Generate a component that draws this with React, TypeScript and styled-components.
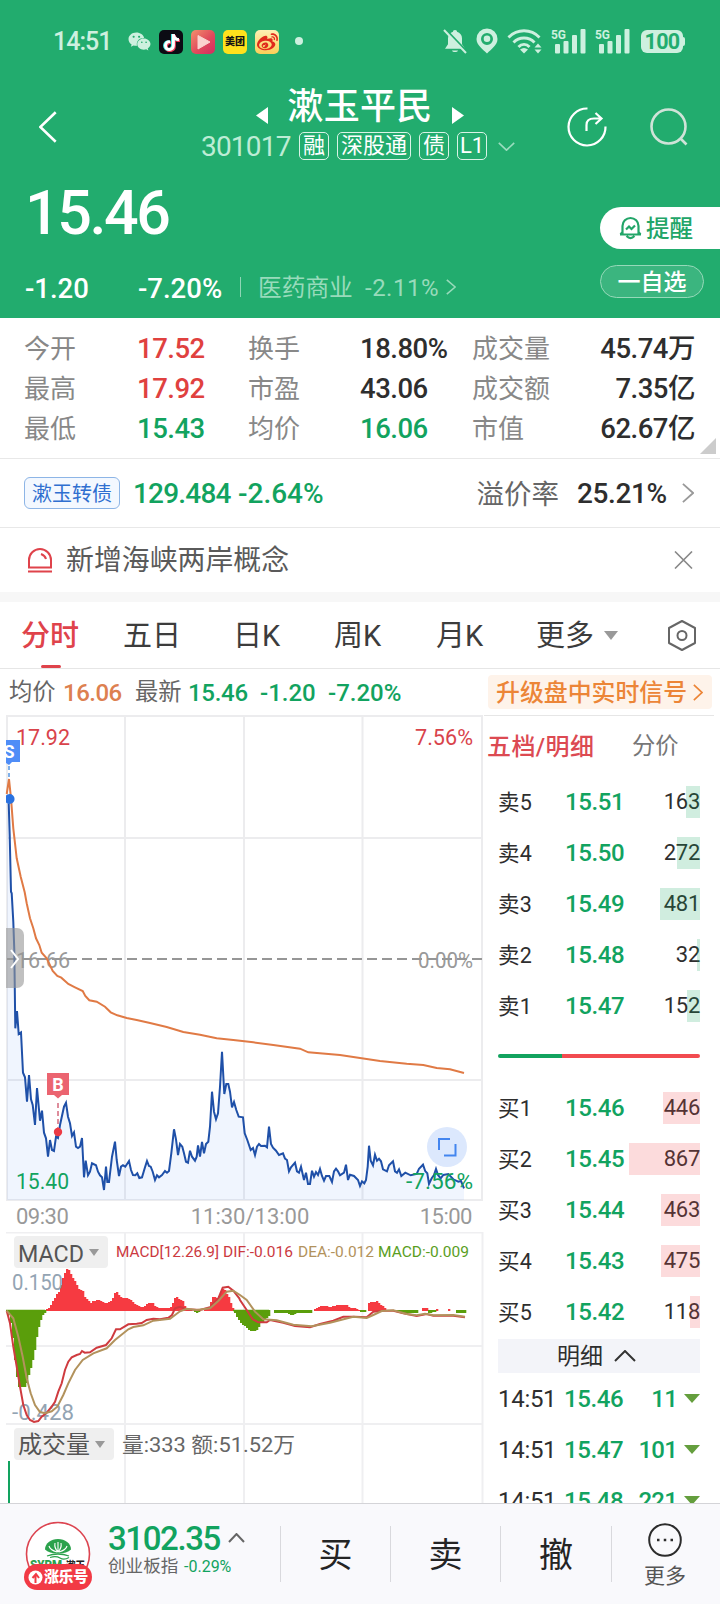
import React from "react";
import styled, { createGlobalStyle } from "styled-components";
import { FaTiktok, FaWeibo, FaWeixin } from "react-icons/fa6";

const GREEN = "#12a35f";
const RED = "#e0413f";
const INK = "#2e2e2e";
const FONT = 'Roboto, "Noto Sans CJK SC", sans-serif';

const GlobalStyle = createGlobalStyle`
  * { box-sizing: border-box; }
  body { margin: 0; background: #fff; font-family: ${FONT}; color: ${INK}; }
  svg { display: block; flex: none; }
`;

const Page = styled.div`
  width: 720px;
  height: 1604px;
  display: flex;
  flex-direction: column;
  overflow: hidden;
  background: #fff;
`;

const Txt = styled.span<{ $s: number; $c?: string; $w?: number; $ls?: number; $ml?: number; $width?: number }>`
  flex: none;
  padding-top: 2px;
  white-space: nowrap;
  font-size: ${(p) => p.$s}px;
  line-height: 1.2;
  color: ${(p) => p.$c || "inherit"};
  font-weight: ${(p) => p.$w || 400};
  letter-spacing: ${(p) => p.$ls || 0}px;
  margin-left: ${(p) => p.$ml || 0}px;
  width: ${(p) => (p.$width ? p.$width + "px" : "auto")};
`;

/* ---------- header ---------- */
const Header = styled.header`
  height: 318px;
  flex: none;
  background: #22ac6e;
  color: #fff;
`;
const StatusBar = styled.div`
  height: 82px;
  display: flex;
  align-items: center;
  padding: 0 35px 0 53px;
  color: #cdf0df;
`;
const AppIcon = styled.div<{ $bg: string }>`
  width: 24px;
  height: 24px;
  border-radius: 5px;
  margin: 2px 0 0 8px;
  display: flex;
  align-items: center;
  justify-content: center;
  background: ${(p) => p.$bg};
  color: #151515;
  font-size: 10px;
  font-weight: 900;
  line-height: 1;
`;
const NoticeDot = styled.i`
  width: 8px;
  height: 8px;
  border-radius: 50%;
  background: #cdf0df;
  margin: 0 auto 0 16px;
`;
const StatusIcons = styled.div`
  display: flex;
  align-items: center;
`;
const Battery = styled.div`
  width: 42px;
  height: 23px;
  margin-left: 11px;
  border-radius: 6px;
  background: #cdf0df;
  color: #22ac6e;
  font-size: 21.5px;
  font-weight: 700;
  line-height: 24px;
  text-align: center;
  letter-spacing: -0.6px;
`;
const BatteryTip = styled.i`
  width: 2px;
  height: 9px;
  background: #cdf0df;
  border-radius: 0 2px 2px 0;
`;
const TitleBar = styled.div`
  height: 90px;
  display: grid;
  grid-template-columns: 201px 317px 202px;
`;
const Side = styled.div<{ $pl: number; $gap?: number }>`
  display: flex;
  align-items: center;
  padding-left: ${(p) => p.$pl}px;
  gap: ${(p) => p.$gap || 0}px;
`;
const TitleLine = styled.div`
  height: 48px;
  display: flex;
  align-items: center;
  justify-content: center;
  gap: 19px;
  padding: 2px 0 0 1px;
  svg { margin-top: 17px; }
`;
const CodeLine = styled.div`
  height: 32px;
  display: flex;
  align-items: center;
  gap: 8px;
`;
const Tag = styled.span`
  height: 28px;
  min-width: 30px;
  padding: 0 2px;
  border: 1px solid #d9f3e6;
  border-radius: 5px;
  font-size: 22px;
  line-height: 26px;
  text-align: center;
  white-space: nowrap;
`;
const WideTag = styled(Tag)`
  width: 74px;
`;
const HeaderBody = styled.div`
  display: flex;
  height: 146px;
`;
const Figures = styled.div`
  flex: 1;
`;
const PriceLine = styled.div`
  height: 82px;
  display: flex;
  align-items: center;
  padding-left: 25px;
`;
const ChangeLine = styled.div`
  height: 66px;
  display: flex;
  align-items: center;
  padding-left: 25px;
`;
const VRule = styled.i<{ $h: number; $c: string }>`
  width: 1px;
  height: ${(p) => p.$h}px;
  background: ${(p) => p.$c};
  flex: none;
`;
const Actions = styled.div`
  width: 120px;
  padding-top: 35px;
`;
const RemindButton = styled.div`
  height: 42px;
  border-radius: 21px 0 0 21px;
  background: #fff;
  display: flex;
  align-items: center;
  padding-left: 19px;
  gap: 4px;
`;
const WatchButton = styled.div`
  width: 104px;
  height: 33px;
  margin-top: 16px;
  border-radius: 17px;
  border: 1px solid #96d9b9;
  background: #3bb57f;
  display: flex;
  align-items: center;
  justify-content: center;
`;

/* ---------- figures under the header ---------- */
const Stats = styled.section`
  position: relative;
  height: 141px;
  flex: none;
  padding: 11px 25px 0 24px;
  border-bottom: 1px solid #e8e8e8;
  display: grid;
  grid-template-columns: 113px 111px 112px 112px 90px 1fr;
  grid-auto-rows: 40px;
  align-items: center;
  align-content: start;
`;
const StatLabel = styled.span`
  font-size: 26px;
  line-height: 40px;
  color: #888;
  white-space: nowrap;
`;
const StatValue = styled.span<{ $c?: string; $last?: boolean }>`
  font-size: 27.5px;
  line-height: 40px;
  font-weight: 500;
  letter-spacing: -0.5px;
  white-space: nowrap;
  color: ${(p) => p.$c || INK};
  text-align: ${(p) => (p.$last ? "right" : "left")};
`;
const Corner = styled.i`
  position: absolute;
  right: 4px;
  bottom: 4px;
  border-left: 16px solid transparent;
  border-bottom: 16px solid #ccc;
`;
const BondRow = styled.section`
  height: 69px;
  flex: none;
  display: flex;
  align-items: center;
  padding: 0 26px 0 24px;
  border-bottom: 1px solid #e8e8e8;
`;
const BondTag = styled.span`
  width: 96px;
  height: 32px;
  border: 1px solid #8db5e6;
  border-radius: 6px;
  background: #f3f8ff;
  color: #2f6fd0;
  font-size: 20px;
  line-height: 32px;
  text-align: center;
`;
const Spacer = styled.i`
  flex: 1;
`;
const NewsRow = styled.section`
  height: 74px;
  flex: none;
  display: flex;
  align-items: center;
  padding: 0 27px;
  border-bottom: 10px solid #f7f7f7;
`;

/* ---------- tabs ---------- */
const Tabs = styled.nav`
  height: 67px;
  flex: none;
  display: flex;
  align-items: center;
  padding-left: 21px;
  border-bottom: 1px solid #e6e6e6;
`;
const Tab = styled.div<{ $w: number; $on?: boolean }>`
  position: relative;
  width: ${(p) => p.$w}px;
  height: 66px;
  line-height: 68px;
  font-size: 29px;
  color: ${(p) => (p.$on ? "#df434b" : "#3c3c3c")};
  font-weight: ${(p) => (p.$on ? 500 : 400)};
  &::after {
    content: "";
    display: ${(p) => (p.$on ? "block" : "none")};
    position: absolute;
    left: 20px;
    bottom: 0;
    width: 20px;
    height: 3px;
    border-radius: 2px;
    background: #df434b;
  }
`;
const QuoteBar = styled.div`
  height: 46px;
  flex: none;
  display: flex;
  align-items: center;
  padding: 0 8px 0 9px;
`;
const Upgrade = styled.div`
  width: 224px;
  height: 34px;
  margin-left: auto;
  border-radius: 4px;
  background: #fef3ea;
  display: flex;
  align-items: center;
  justify-content: space-between;
  padding: 0 9px 0 8px;
`;

/* ---------- main area ---------- */
const Main = styled.main`
  height: 788px;
  flex: none;
  display: flex;
  overflow: hidden;
`;
const Charts = styled.div`
  width: 484px;
  flex: none;
`;
const Axis = styled.div`
  height: 30px;
  display: flex;
  justify-content: space-between;
  align-items: center;
  padding: 0 12px 2px 16px;
`;
const Book = styled.aside`
  width: 230px;
  padding: 0 14px;
  border-top: 1px solid #e6e6e6;
`;
const BookTabs = styled.div`
  height: 60px;
  display: flex;
  align-items: center;
  margin-left: -11px;
`;
const Level = styled.div`
  height: 51px;
  display: flex;
  align-items: center;
`;
const Qty = styled.div`
  position: relative;
  flex: 1;
  height: 32px;
  display: flex;
  align-items: center;
  justify-content: flex-end;
`;
const QtyBar = styled.i<{ $c: string }>`
  position: absolute;
  right: 0;
  top: 0;
  height: 32px;
  background: ${(p) => p.$c};
`;
const Ratio = styled.div`
  height: 51px;
  padding-top: 23px;
  &::before {
    content: "";
    display: block;
    height: 4px;
    border-radius: 2px;
    background: linear-gradient(to right, ${GREEN} 64px, #f24b50 64px);
  }
`;
const DetailHead = styled.div`
  height: 34px;
  margin-top: 2px;
  background: #f3f4f9;
  display: flex;
  align-items: center;
  justify-content: center;
  gap: 11px;
  padding-right: 5px;
`;
const Trade = styled.div`
  height: 51px;
  display: flex;
  align-items: center;
`;

/* ---------- bottom bar ---------- */
const Bottom = styled.footer`
  height: 101px;
  flex: none;
  border-top: 1px solid #d4d4d8;
  background: #f9f9fc;
  display: flex;
  align-items: center;
`;
const Avatar = styled.div`
  width: 68px;
  height: 70px;
  margin: 2px 0 0 24px;
  position: relative;
`;
const AvatarBadge = styled.div`
  position: absolute;
  left: 0;
  bottom: 0;
  width: 68px;
  height: 26px;
  border-radius: 13px;
  background: #f23a45;
  color: #fff;
  font-size: 15px;
  font-weight: 800;
  line-height: 26px;
  display: flex;
  align-items: center;
  gap: 1px;
  padding-left: 4px;
  letter-spacing: -0.4px;
  white-space: nowrap;
`;
const IndexBox = styled.div`
  width: 172px;
  height: 66px;
  margin-left: 16px;
`;
const IndexLine = styled.div<{ $h: number }>`
  height: ${(p) => p.$h}px;
  display: flex;
  align-items: center;
`;
const Order = styled.div<{ $w?: number }>`
  width: ${(p) => p.$w || 110}px;
  height: 56px;
  border-left: 1px solid #d9d9dd;
  font-size: 34px;
  line-height: 58px;
  text-align: center;
  color: #242424;
`;
const More = styled.div`
  width: 107px;
  height: 56px;
  border-left: 1px solid #d9d9dd;
  display: flex;
  flex-direction: column;
  align-items: center;
  justify-content: center;
  gap: 5px;
  padding-top: 3px;
`;

/* ---------- chart data, three units per pixel ---------- */
type Seg = { x: number; y: number; p: string };
const toPoints = (segs: Seg[]) =>
  segs
    .map((s) =>
      s.p
        .trim()
        .split(/\s+/)
        .map((q) => {
          const [a, b] = q.split(",").map(Number);
          return `${(s.x + a / 3).toFixed(1)},${(s.y + b / 3).toFixed(1)}`;
        })
        .join(" ")
    )
    .join(" ");

const price = toPoints([
  { x: 0, y: 595, p: "26,625 29,720 33,890" },
  {
    x: 0, y: 890,
    p: "35,10 40,95 43,180 46,415 51,363 56,432 63,427 69,548 75,562 81,635 87,555 93,628 98,645 105,705 111,594 120,692 126,662 132,728 138,745 144,800 150,750 156,780 162,783 168,740 174,744 180,705 192,650 198,638 204,680 210,700 216,738 222,727 228,770 234,774 240,770 246,744 252,862 257,812 264,856 270,845 276,820 288,826 294,845 300,856 306,862 312,900 318,830 322,876 327,876 336,800 345,755 350,810 357,858 363,830 369,826 376,830 387,813 393,840 399,855 406,856 412,850 418,864 426,862 434,835 441,813 447,828 452,830 458,845 465,870 471,856 477,862 486,855 495,843 501,848 507,843 514,790 522,718 528,748 534,795 540,762 547,770 552,790 558,815 564,818 570,782 576,800 585,812 590,800 594,766 600,800 606,756 612,790 618,762 625,755 630,710 636,605 642,665 648,688 654,670 660,590 666,485 673,612 679,582 685,582 690,605 696,652 702,636 709,660 716,680",
  },
  {
    x: 240, y: 1000,
    p: "9,352 14,400 22,420 32,450 39,444 45,465 51,440 57,432 63,438 75,437 81,442 87,380 93,432 99,443 108,452 117,465 129,460 135,476 141,480 147,514 153,502 165,488 171,514 177,518 183,500 192,540 198,518 204,552 210,552 216,512 222,530 228,516 234,525 240,507 246,528 252,542 258,528 268,528 276,546 282,514 288,506 294,514 300,526 312,518 318,494 324,540 330,524 342,528 354,540 360,558 366,544 373,550 378,540 383,500 387,437 392,482 399,496 405,464 411,482 417,476 423,484 429,508 441,514 447,496 459,484 465,514 471,518 477,508 484,528 496,518 512,526 530,522 537,506 549,494 556,514 562,520 567,552 575,535 582,525 588,507 594,525 602,535 610,525 625,522 640,538 655,545 663,543 672,565",
  },
]);
const average = toPoints([
  { x: 0, y: 595, p: "20,597 27,552 33,610 40,700 50,790 62,845 74,892" },
  { x: 0, y: 890, p: "80,40 90,85 100,115 108,145 118,165 125,188 140,205 158,243 172,258 184,263 205,282 225,292 248,303 256,318 268,331 290,335 315,350 332,367 352,376 380,384 410,390 450,399 500,411 550,426 600,434 650,445 700,450" },
  { x: 240, y: 1000, p: "0,122 40,127 100,135 180,146 205,157 300,165 360,174 420,183 500,191 550,195 590,204 630,208 672,219" },
]);
const dif = toPoints([
  { x: 0, y: 1220, p: "20,272 30,310 40,380 50,440 60,500 70,555 80,585 90,600 102,606 115,603 125,590 140,578 155,560 165,545 175,515 185,490 195,450 205,425 215,412 230,405 240,402 246,393 254,398 270,397 290,383 318,375 335,355 348,328 360,328 385,313 410,311 425,309 440,300 460,296 480,298 505,293 516,285 525,265 540,260 560,268 600,270 630,262 640,250 655,235 668,203 685,200 700,212 718,235" },
  { x: 240, y: 1220, p: "0,240 20,270 38,298 55,307 80,307 90,300 130,308 165,318 210,322 240,312 280,302 310,290 345,290 380,292 400,275 430,272 460,272 490,280 530,288 560,282 580,287 640,287 675,292" },
]);
const dea = toPoints([
  { x: 0, y: 1220, p: "20,272 40,295 55,350 68,410 80,475 92,520 105,555 120,576 135,580 155,574 172,560 190,525 205,490 225,450 248,420 280,400 320,385 345,360 385,328 400,321 430,316 460,302 510,296 540,274 560,266 590,270 630,265 655,243 680,215 700,212" },
  { x: 240, y: 1220, p: "0,225 20,240 45,275 70,298 110,301 160,314 215,319 270,308 340,290 380,294 400,285 425,273 460,271 500,282 530,286 555,281 580,286 640,285 675,290" },
]);

/* Histogram bars two pixels wide, interpolated between the outline points. */
const ZERO = 1311;
const bars = (seg: Seg) => {
  const pts = toPoints([seg]).split(" ").map((q) => q.split(",").map(Number));
  let d = "";
  for (let i = 0; i + 1 < pts.length; i++) {
    const [x0, y0] = pts[i];
    const [x1, y1] = pts[i + 1];
    for (let x = Math.ceil(x0 / 2) * 2; x < x1; x += 2) {
      const y = Math.round(y0 + ((y1 - y0) * (x - x0)) / (x1 - x0));
      d += y < ZERO ? `M${x} ${y}h2.3V${ZERO}h-2.3z` : `M${x} ${ZERO - 1}h2.3V${y}h-2.3z`;
    }
  }
  return d;
};
const upBars = [
  { x: 0, y: 1220, p: "136,268 148,262 152,248 160,240 166,225 174,215 180,195 186,175 192,160 198,148 206,152 214,172 222,182 228,195 234,208 246,214 252,232 262,240 270,250 278,242 295,240 303,246 320,250 332,242 340,225 345,212 352,224 360,232 388,236 398,250 410,256 425,262 434,256 440,248 455,248 462,258 480,265 505,265 513,258 518,242 524,228 534,238 545,240 552,258 565,268 575,270" },
  { x: 0, y: 1220, p: "610,269 625,262 630,245 638,228 650,235 656,225 664,205 672,210 684,232 692,255 700,270" },
  { x: 240, y: 1220, p: "220,268 226,264 240,258 270,260 292,254 318,254 326,262 345,266 357,270" },
  { x: 240, y: 1220, p: "381,260 384,250 392,246 408,244 414,250 426,258 437,270" },
  { x: 240, y: 1220, p: "541,265 564,265" },
  { x: 240, y: 1220, p: "586,266 591,266" },
  { x: 240, y: 1220, p: "621,266 627,266" },
].map(bars).join("");
const downBars = [
  { x: 0, y: 1220, p: "20,275 26,290 34,330 42,420 48,470 54,500 62,503 74,500 80,485 86,455 94,430 100,405 108,350 114,320 120,300 126,285 134,276" },
  { x: 0, y: 1220, p: "580,276 590,280 596,276" },
  { x: 0, y: 1220, p: "702,278 708,290 716,305 726,315 736,322 750,328" },
  { x: 240, y: 1220, p: "30,330 38,334 48,330 60,310 72,300 84,288 88,280" },
  { x: 240, y: 1220, p: "0,308 12,318 24,330 32,332" },
  { x: 240, y: 1220, p: "97,278 140,280 152,286 165,280 213,278" },
  { x: 240, y: 1220, p: "357,277 375,277" },
  { x: 240, y: 1220, p: "465,277 500,279 533,279" },
  { x: 240, y: 1220, p: "564,279 584,276" },
  { x: 240, y: 1220, p: "645,280 675,280" },
].map(bars).join("");

const Chevron = ({ w, h, c, s = 2, d }: { w: number; h: number; c: string; s?: number; d: "l" | "r" | "u" | "d" }) => {
  const e = s / 2;
  const path = {
    l: `M${w - e} ${e}L${e} ${h / 2}L${w - e} ${h - e}`,
    r: `M${e} ${e}L${w - e} ${h / 2}L${e} ${h - e}`,
    u: `M${e} ${h - e}L${w / 2} ${e}L${w - e} ${h - e}`,
    d: `M${e} ${e}L${w / 2} ${h - e}L${w - e} ${e}`,
  }[d];
  return (
    <svg width={w} height={h} fill="none" stroke={c} strokeWidth={s}>
      <path d={path} />
    </svg>
  );
};

const SignalIcon = styled.svg`
  margin-left: 9px;
  overflow: visible;
`;
const Signal = () => (
  <SignalIcon width="35" height="25" fill="#cdf0df">
    <text x="0" y="9.5" fontSize="12.500" fontWeight="700" textLength="15" lengthAdjust="spacingAndGlyphs">5G</text>
    <rect x="4" y="15" width="5" height="9.500" rx="1" />
    <rect x="12.5" y="12" width="5" height="12.500" rx="1" />
    <rect x="21" y="6" width="5" height="18.500" rx="1" />
    <rect x="29.500" y="0" width="5" height="24.500" rx="1" />
  </SignalIcon>
);

const Label = ({ x, y, w, c, s = 22, children }: { x: number; y: number; w: number; c: string; s?: number; children: string }) => (
  <text x={x} y={y} fontSize={s} fill={c} textLength={w} lengthAdjust="spacingAndGlyphs">{children}</text>
);

const PriceChart = () => (
  <svg width="484" height="487" viewBox="0 715 484 487" fontFamily={FONT}>
    <g stroke="#ececee" strokeWidth="2" fill="none">
      <path d="M125 717V1201M244 717V1201M362.500 717V1201M8 838H482M8 1080H482" />
      <path d="M7 716H482V1200H7z" />
    </g>
    <polygon points={`7,1200 7,805 ${price} 464,1200`} fill="#3b82f6" opacity="0.08" />
    <path d="M7 959H482" stroke="#969696" strokeWidth="2" strokeDasharray="10 5" />
    <Label x={16} y={745} w={54} c="#d9434b">17.92</Label>
    <Label x={415} y={745} w={58} c="#d9434b">7.56%</Label>
    <Label x={16} y={968} w={54} c="#999">16.66</Label>
    <Label x={418} y={968} w={55} c="#999">0.00%</Label>
    <Label x={16} y={1189} w={53} c={GREEN}>15.40</Label>
    <polyline points={price} fill="none" stroke="#1f50a8" strokeWidth="2" />
    <Label x={406} y={1189} w={67} c={GREEN}>-7.56%</Label>
    <polyline points={average} fill="none" stroke="#e07a45" strokeWidth="2" />
    <path d="M9 766V780" stroke="#7fb0ea" strokeWidth="2" strokeDasharray="4 3" />
    <path d="M6 740H20V762H12L9 765L6 763z" fill="#4f8df7" />
    <svg x="6" y="740" width="14" height="24" viewBox="6 740 14 24">
      <text x="3.500" y="757.500" fontSize="18" fontWeight="700" fill="#fff">S</text>
    </svg>
    <path d="M6 795.500a5 5 0 1 1 0 7z" fill="#2a72e0" />
    <path d="M47 1073H69V1095H62L58 1098.500L54 1095H47z" fill="#eb6470" />
    <text x="58" y="1090.500" fontSize="18" fontWeight="700" fill="#fff" textAnchor="middle">B</text>
    <path d="M58 1103V1128" stroke="#de8d9c" strokeWidth="2" strokeDasharray="5 3" />
    <circle cx="58" cy="1132" r="4.200" fill="#ec3a44" />
    <path d="M6 928H17a7 7 0 0 1 7 7V981a7 7 0 0 1-7 7H6z" fill="#969696" opacity="0.6" />
    <path d="M11 950L18 959L11 968" stroke="#fff" strokeWidth="2" fill="none" />
    <circle cx="447" cy="1147" r="20" fill="#dce8fd" />
    <path d="M439 1150V1139H450M444 1155.500H455.500V1144" stroke="#4385ef" strokeWidth="2" fill="none" />
  </svg>
);

const IndicatorCharts = () => (
  <svg width="484" height="271" viewBox="0 1232 484 271" fontFamily={FONT}>
    <path d="M6 1232.500H482M6 1346H482M6 1424H482M125 1232V1503M244 1232V1503M362.500 1232V1503M482.500 1232V1503" stroke="#efeff1" strokeWidth="2" fill="none" />
    <path d={upBars} fill="#f63a41" />
    <path d={downBars} fill="#5a9e0b" />
    <path d="M6 1310.500H45M233 1310.500H269" stroke="#5a9e0b" strokeWidth="1.500" />
    <Label x={12} y={1290} w={51} c="#93a4b3">0.150</Label>
    <Label x={12} y={1420} w={62} c="#93a4b3">-0.428</Label>
    <polyline points={dif} fill="none" stroke="#cf3b3f" strokeWidth="2" />
    <polyline points={dea} fill="none" stroke="#b2925c" strokeWidth="2" />
    <rect x="14" y="1236" width="94" height="32" rx="4" fill="#efefef" />
    <Label x={18} y={1262} w={66} c="#555" s={24}>MACD</Label>
    <path d="M89 1249H99L94 1256z" fill="#999" />
    <Label x={116} y={1257} w={103} c="#cb3a3f" s={15}>MACD[12.26.9]</Label>
    <Label x={223} y={1257} w={70} c="#cb3a3f" s={15}>DIF:-0.016</Label>
    <Label x={298} y={1257} w={76} c="#b2925c" s={15}>DEA:-0.012</Label>
    <Label x={378} y={1257} w={91} c="#5a9e1e" s={15}>MACD:-0.009</Label>
    <rect x="14" y="1428" width="100" height="32" rx="4" fill="#efefef" />
    <Label x={18} y={1453} w={72} c="#555" s={24}>成交量</Label>
    <path d="M95 1441H105L100 1448z" fill="#999" />
    <Label x={122} y={1452} w={173} c="#666" s={21}>量:333 额:51.52万</Label>
    <path d="M9 1461V1503" stroke={GREEN} strokeWidth="2" />
  </svg>
);

const sells = [["卖5", "15.51", "163", 14], ["卖4", "15.50", "272", 23], ["卖3", "15.49", "481", 40], ["卖2", "15.48", "32", 3], ["卖1", "15.47", "152", 13]] as const;
const buys = [["买1", "15.46", "446", 37], ["买2", "15.45", "867", 71], ["买3", "15.44", "463", 39], ["买4", "15.43", "475", 39], ["买5", "15.42", "118", 10]] as const;
const trades = [["15.46", "11"], ["15.47", "101"], ["15.48", "221"]];

const LevelRow = ({ row, tone }: { row: readonly [string, string, string, number]; tone: string }) => (
  <Level>
    <Txt $s={21.5} $width={67} $ls={0.3}>{row[0]}</Txt>
    <Txt $s={24} $w={500} $c={GREEN} $width={62} $ls={-0.4}>{row[1]}</Txt>
    <Qty>
      <Txt $s={22} $ls={-0.3}>{row[2]}</Txt>
      <QtyBar $c={tone} style={{ width: row[3] }} />
    </Qty>
  </Level>
);

export default function App() {
  return (
    <Page>
      <GlobalStyle />
      <Header>
        <StatusBar>
          <Txt $s={25} $w={500} $width={75} $ls={-1}>14:51</Txt>
          <FaWeixin size={23} />
          <AppIcon $bg="#0b0c14">
            <FaTiktok size={17} color="#fff" style={{ filter: "drop-shadow(-1px 0 0 #3ee6e6) drop-shadow(1px 1px 0 #ee3a5a)" }} />
          </AppIcon>
          <AppIcon $bg="linear-gradient(135deg,#f2906c,#e04a5c 55%,#d42a62)">
            <svg width="24" height="24"><path d="M7 5.500L19 12L7 19z" fill="#fbd3cf" stroke="#fbd3cf" strokeLinejoin="round" /></svg>
          </AppIcon>
          <AppIcon $bg="#ffe11c">美团</AppIcon>
          <AppIcon $bg="linear-gradient(#fdf0b4,#fbcf58)">
            <FaWeibo size={21} color="#e02a1c" />
          </AppIcon>
          <NoticeDot />
          <StatusIcons>
            <svg width="24" height="25" fill="#cdf0df">
              <path d="M12 1c1.500 0 2 .8 2 1.800c3 .8 5 3.400 5 6.400v6l3 4.500H2l3-4.500v-6c0-3 2-5.600 5-6.400C10 1.800 10.500 1 12 1zM9 21.500h6c-.5 2-5.500 2-6 0z" />
              <path d="M2 0L24 23" stroke="#22ac6e" strokeWidth="2.500" />
              <path d="M1 1L23 24" stroke="#cdf0df" strokeWidth="2" />
            </svg>
            <Side $pl={9}>
              <svg width="22" height="26" fill="#cdf0df">
                <path fillRule="evenodd" d="M11 0.500a10.500 10.500 0 0 1 10.500 10.500c0 6-6 10-10.500 14.500C6.500 21 .5 17 .5 11A10.500 10.500 0 0 1 11 .5zM11 5a6 6 0 1 0 0 12a6 6 0 0 0 0-12zM11 7.500a3.300 3.300 0 1 1 0 6.600a3.300 3.300 0 0 1 0-6.600z" />
              </svg>
            </Side>
            <Side $pl={9}>
              <svg width="35" height="26" fill="none" stroke="#cdf0df" strokeWidth="2.800">
                <path d="M1.500 9.500C10 .5 24 .5 32.500 9.500M6.500 14.500C12 8.500 22 8.500 27.500 14.500M11.500 19C14.500 15.500 19.500 15.500 22.500 19" />
                <path d="M13 21.500Q17 18.500 21 21.500L17 25.500z" fill="#cdf0df" stroke="none" />
                <path d="M27.500 19.500h7L31 15.500zM27.500 21.500h7L31 25.500z" fill="#cdf0df" stroke="none" />
              </svg>
            </Side>
            <Signal />
            <Signal />
            <Battery>100</Battery>
            <BatteryTip />
          </StatusIcons>
        </StatusBar>
        <TitleBar>
          <Side $pl={39}><Chevron w={18} h={32} c="#fff" s={2.6} d="l" /></Side>
          <div>
            <TitleLine>
              <svg width="12" height="17"><path d="M12 0V17L0 8.500z" fill="#fff" /></svg>
              <Txt $s={36} $w={500} $ls={0.3}>漱玉平民</Txt>
              <svg width="12" height="17"><path d="M0 0V17L12 8.500z" fill="#fff" /></svg>
            </TitleLine>
            <CodeLine>
              <Txt $s={28} $c="#bdecd5" $ls={-0.8} $width={90}>301017</Txt>
              <Tag>融</Tag>
              <WideTag>深股通</WideTag>
              <Tag>债</Tag>
              <Tag>L1</Tag>
              <Side $pl={3}><Chevron w={17} h={9} c="#9addbf" s={1.6} d="d" /></Side>
            </CodeLine>
          </div>
          <Side $pl={49} $gap={43}>
            <svg width="40" height="40" fill="none" stroke="#fff" strokeWidth="2.200">
              <path d="M20.500 1.500A18.500 18.500 0 1 0 38.500 19.500M19.500 24V18Q19.500 11.500 27 11.500H34M28.500 6L34.500 11.500L28.500 17" />
            </svg>
            <svg width="38" height="38" fill="none" stroke="#cfe3d8" strokeWidth="2.600">
              <circle cx="18.500" cy="18.500" r="17" /><path d="M30.500 30.500L36.500 36.500" />
            </svg>
          </Side>
        </TitleBar>
        <HeaderBody>
          <Figures>
            <PriceLine><Txt $s={61} $w={500} $ls={-2.4}>15.46</Txt></PriceLine>
            <ChangeLine>
              <Txt $s={27.5} $w={500} $width={113}>-1.20</Txt>
              <Txt $s={27.5} $w={500} $width={102}>-7.20%</Txt>
              <VRule $h={20} $c="#8fd6b5" />
              <Txt $s={23.7} $c="#98dbbb" $width={107} $ml={17}>医药商业</Txt>
              <Txt $s={24} $c="#98dbbb" $width={81} $ls={0.5}>-2.11%</Txt>
              <Chevron w={10} h={16} c="#98dbbb" s={1.6} d="r" />
            </ChangeLine>
          </Figures>
          <Actions>
            <RemindButton>
              <svg width="23" height="24" fill="none" stroke="#22a568" strokeWidth="2.200">
                <path d="M3.500 17.500V10a8 8 0 0 1 16 0V17.500M1 18.500H22M3.500 16L1.500 18.500M19.500 16L21.500 18.500M7.500 20q4 4 8 0" />
                <path d="M7 13.500L10 10.500L12.500 13L16 9.500" />
              </svg>
              <Txt $s={23.5} $w={500} $c="#22a568">提醒</Txt>
            </RemindButton>
            <WatchButton><Txt $s={23} $w={500}>一自选</Txt></WatchButton>
          </Actions>
        </HeaderBody>
      </Header>

      <Stats>
        <StatLabel>今开</StatLabel><StatValue $c={RED}>17.52</StatValue>
        <StatLabel>换手</StatLabel><StatValue>18.80%</StatValue>
        <StatLabel>成交量</StatLabel><StatValue $last>45.74万</StatValue>
        <StatLabel>最高</StatLabel><StatValue $c={RED}>17.92</StatValue>
        <StatLabel>市盈</StatLabel><StatValue>43.06</StatValue>
        <StatLabel>成交额</StatLabel><StatValue $last>7.35亿</StatValue>
        <StatLabel>最低</StatLabel><StatValue $c={GREEN}>15.43</StatValue>
        <StatLabel>均价</StatLabel><StatValue $c={GREEN}>16.06</StatValue>
        <StatLabel>市值</StatLabel><StatValue $last>62.67亿</StatValue>
        <Corner />
      </Stats>

      <BondRow>
        <BondTag>漱玉转债</BondTag>
        <Txt $s={28} $w={500} $c={GREEN} $ls={-0.8} $ml={13} $width={105}>129.484</Txt>
        <Txt $s={28} $w={500} $c={GREEN}>-2.64%</Txt>
        <Spacer />
        <Txt $s={27.5} $c="#666">溢价率</Txt>
        <Txt $s={28} $w={500} $ml={18} $width={105} $ls={-0.4}>25.21%</Txt>
        <Chevron w={12} h={20} c="#999" s={1.8} d="r" />
      </BondRow>

      <NewsRow>
        <svg width="26" height="25" fill="none" stroke="#df434b" strokeWidth="2">
          <path d="M2 19.500V12a11 11 0 0 1 22 0V19.500zM1 23.500H25M14 6q4 1.500 5 5" />
        </svg>
        <Txt $s={27.9} $c="#5a5a5a" $ml={13}>新增海峡两岸概念</Txt>
        <Spacer />
        <svg width="19" height="18" stroke="#888" strokeWidth="1.600"><path d="M1 .5L18 17.500M18 .5L1 17.500" /></svg>
      </NewsRow>

      <Tabs>
        <Tab $w={102} $on>分时</Tab>
        <Tab $w={110}>五日</Tab>
        <Tab $w={101}>日K</Tab>
        <Tab $w={102}>周K</Tab>
        <Tab $w={100}>月K</Tab>
        <Tab $w={68}>更多</Tab>
        <svg width="14" height="9"><path d="M0 0H14L7 9z" fill="#999" /></svg>
        <Side $pl={49}>
          <svg width="30" height="33" fill="none" stroke="#666" strokeWidth="2" strokeLinejoin="round">
            <path d="M15 2L28 9V24L15 31L2 24V9z" /><circle cx="15" cy="16.500" r="4.500" />
          </svg>
        </Side>
      </Tabs>

      <QuoteBar>
        <Txt $s={23.3} $c="#666" $width={54}>均价</Txt>
        <Txt $s={24} $w={500} $c="#dd8050" $width={72} $ls={-0.5}>16.06</Txt>
        <Txt $s={23.3} $c="#666" $width={53}>最新</Txt>
        <Txt $s={24} $w={500} $c={GREEN} $width={72} $ls={-0.3}>15.46</Txt>
        <Txt $s={24} $w={500} $c={GREEN} $width={68}>-1.20</Txt>
        <Txt $s={24} $w={500} $c={GREEN}>-7.20%</Txt>
        <Upgrade>
          <Txt $s={23.9} $w={500} $c="#ec8537">升级盘中实时信号</Txt>
          <Chevron w={10} h={17} c="#ec8537" s={1.7} d="r" />
        </Upgrade>
      </QuoteBar>

      <Main>
        <Charts>
          <PriceChart />
          <Axis>
            <Txt $s={22} $c="#999" $ls={-0.5}>09:30</Txt>
            <Txt $s={22} $c="#999" $ml={12}>11:30/13:00</Txt>
            <Txt $s={22} $c="#999" $ls={-0.5}>15:00</Txt>
          </Axis>
          <IndicatorCharts />
        </Charts>
        <Book>
          <BookTabs>
            <Txt $s={24} $w={500} $c="#dc4a52" $width={145} $ls={0.4}>五档/明细</Txt>
            <Txt $s={23.3} $c="#777">分价</Txt>
          </BookTabs>
          {sells.map((r) => <LevelRow key={r[0]} row={r} tone="rgba(18,163,95,0.2)" />)}
          <Ratio />
          {buys.map((r) => <LevelRow key={r[0]} row={r} tone="rgba(242,75,80,0.2)" />)}
          <DetailHead>
            <Txt $s={23}>明细</Txt>
            <Chevron w={22} h={12} c="#333" s={2} d="u" />
          </DetailHead>
          {trades.map((t) => (
            <Trade key={t[0]}>
              <Txt $s={24} $width={66} $ls={-0.3}>14:51</Txt>
              <Txt $s={24} $w={500} $c={GREEN} $width={60} $ls={-0.4}>{t[0]}</Txt>
              <Spacer />
              <Txt $s={24} $w={500} $c={GREEN} $ls={-0.8}>{t[1]}</Txt>
              <Side $pl={7}><svg width="16" height="9"><path d="M0 0H16L8 9z" fill="#649e3d" /></svg></Side>
            </Trade>
          ))}
        </Book>
      </Main>

      <Bottom>
        <Avatar>
          <svg width="68" height="66" fill="none">
            <circle cx="34" cy="34" r="31.500" fill="#fff" stroke="#dc4450" strokeWidth="1.600" />
            <path d="M21 29.500a13 10.500 0 0 1 26 0q-4 4-13 4t-13-4z" fill="#2ba24c" />
            <path d="M34 32V22M34 32q-4-4-3-9M34 32q4-4 3-9M33 32q-7-2-8-6M35 32q7-2 8-6" stroke="#fff" strokeWidth="1.100" />
            <path d="M23 36q11-4 22 0M26 37.500q6-2 10 .5t9-.5" stroke="#2ba24c" strokeWidth="1.300" />
            <text x="6" y="48.500" fontSize="12" fontWeight="900" fill="#2ba24c" textLength="32" lengthAdjust="spacingAndGlyphs">SYPM</text>
            <text x="42" y="49" fontSize="10" fontWeight="900" fill="#222" textLength="19" lengthAdjust="spacingAndGlyphs">漱玉</text>
          </svg>
          <AvatarBadge>
            <svg width="15" height="17"><circle cx="7.500" cy="8.500" r="7" fill="#fff" /><path d="M7.500 14V6M4.500 9L8 5L11 9" stroke="#f23a45" strokeWidth="2" fill="none" /></svg>
            涨乐号
          </AvatarBadge>
        </Avatar>
        <IndexBox>
          <IndexLine $h={33}>
            <Txt $s={33} $w={500} $c={GREEN} $ls={-1.4} $width={120}>3102.35</Txt>
            <Chevron w={17} h={10} c="#666" s={2} d="u" />
          </IndexLine>
          <IndexLine $h={24}>
            <Txt $s={17.6} $c="#666" $width={76}>创业板指</Txt>
            <Txt $s={16} $c={GREEN}>-0.29%</Txt>
          </IndexLine>
        </IndexBox>
        <Order>买</Order>
        <Order>卖</Order>
        <Order $w={111}>撤</Order>
        <More>
          <svg width="36" height="35" fill="none" stroke="#2c2c2c" strokeWidth="2">
            <circle cx="18" cy="18" r="15.800" />
            <path d="M10 18h2.500M16.750 18h2.500M23.500 18H26" strokeWidth="2.500" />
          </svg>
          <Txt $s={21} $c="#555">更多</Txt>
        </More>
      </Bottom>
    </Page>
  );
}
